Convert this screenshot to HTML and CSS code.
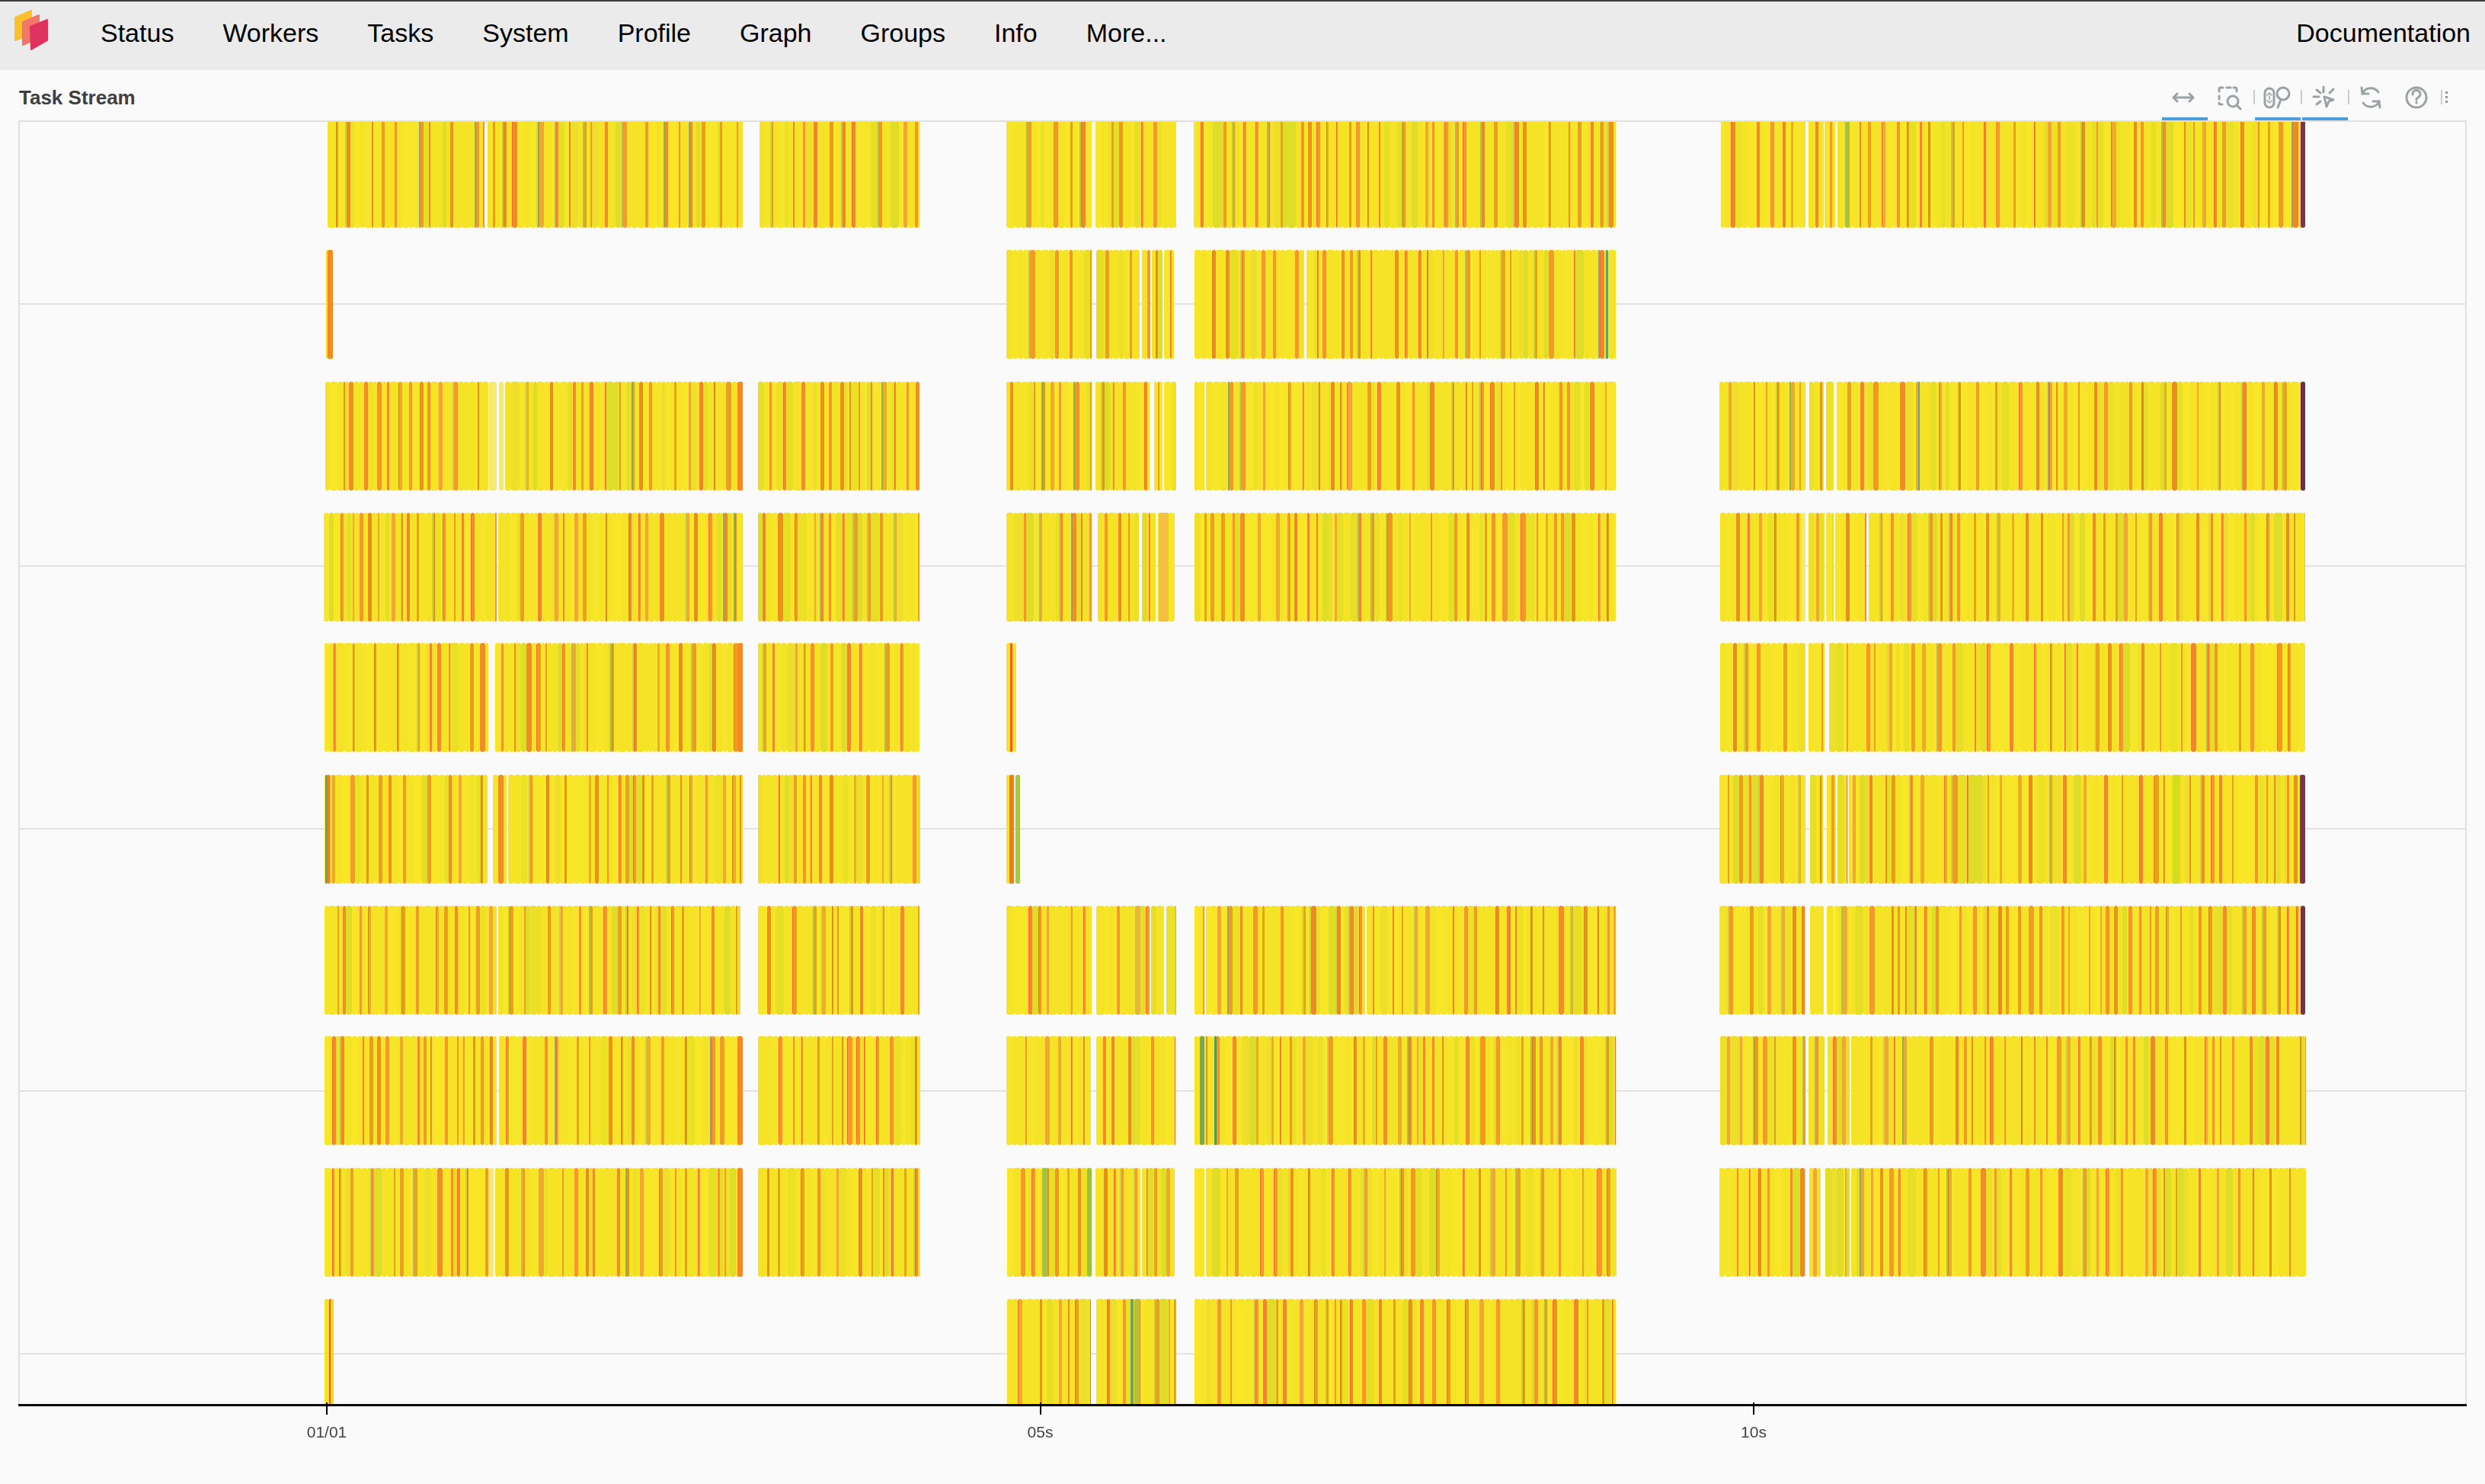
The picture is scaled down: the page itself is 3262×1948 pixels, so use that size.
FILE: index.html
```html
<!DOCTYPE html>
<html>
<head>
  <title>Dask: Task Stream</title>
  <link rel="stylesheet" href="styles.css">
</head>
<body>
  <div class="navbar">
    <svg class="logo" width="48" height="56" viewBox="0 0 48 56">
      <path class="logo-back" d="M2 11 L23 2 L23 32 L2 41 Z"/>
      <path class="logo-mid" d="M12 17 L33 8 L33 38 L12 47 Z"/>
      <path class="logo-front" d="M22 23 L44 14 L44 41 L23 53 Z"/>
    </svg>
    <a class="nav-link" href="#">Status</a>
    <a class="nav-link" href="#">Workers</a>
    <a class="nav-link" href="#">Tasks</a>
    <a class="nav-link" href="#">System</a>
    <a class="nav-link" href="#">Profile</a>
    <a class="nav-link" href="#">Graph</a>
    <a class="nav-link" href="#">Groups</a>
    <a class="nav-link" href="#">Info</a>
    <a class="nav-link" href="#">More...</a>
    <a class="nav-link nav-docs" href="#">Documentation</a>
  </div>

  <div class="chart-header">
    <div class="chart-title">Task Stream</div>
    <div class="toolbar">
      <div class="tool tool-active">
        <svg class="tool-icon" width="60" height="58" viewBox="0 0 60 58">
          <path d="M15 32 H41 M20 27 L15 32 L20 37 M36 27 L41 32 L36 37"/>
        </svg>
      </div>
      <div class="tool">
        <svg class="tool-icon" width="60" height="58" viewBox="0 0 60 58">
          <path d="M15 24 V21 Q15 19 17 19 H20 M25 19 H30 M34 19 H36 Q38 19 38 21 V24 M15 30 V34 M15 39 V40 Q15 41 17 41 H19"/>
          <circle cx="33" cy="37" r="7"/>
          <path d="M38 42 L43 47"/>
        </svg>
      </div>
      <div class="tool-sep"></div>
      <div class="tool tool-active">
        <svg class="tool-icon" width="60" height="58" viewBox="0 0 60 58">
          <rect x="13" y="20" width="12" height="25" rx="6"/>
          <path class="thin" d="M16 29 L19 26 L22 29 M16 36 L19 39 L22 36 M19 30 V35"/>
          <circle cx="37" cy="27" r="8"/>
          <path d="M34 35 L30 45"/>
        </svg>
      </div>
      <div class="tool-sep"></div>
      <div class="tool tool-active">
        <svg class="tool-icon" width="60" height="58" viewBox="0 0 60 58">
          <path d="M28 18 V25 M15 31 H22 M19 22 L24 26 M41 21 L36 26 M19 41 L24 37"/>
          <path d="M29 31 L41 35 L35 37 L32 44 Z"/>
        </svg>
      </div>
      <div class="tool-sep"></div>
      <div class="tool">
        <svg class="tool-icon" width="60" height="58" viewBox="0 0 60 58">
          <path d="M17 27 A12 12 0 0 1 38 25 M39 37 A12 12 0 0 1 18 39"/>
          <path d="M16 19 L17 27 L25 27 M40 45 L39 37 L31 37"/>
        </svg>
      </div>
      <div class="tool">
        <svg class="tool-icon" width="60" height="58" viewBox="0 0 60 58">
          <circle cx="28" cy="32" r="13"/>
          <path d="M23 28 A5 5 0 1 1 30 32 Q28 33 28 35 M28 38 V39"/>
        </svg>
      </div>
      <div class="tool-sep"></div>
      <div class="tool-grip">
        <span class="grip-dot"></span>
        <span class="grip-dot"></span>
        <span class="grip-dot"></span>
      </div>
    </div>
  </div>

  <div class="plot">
    <canvas id="stream" width="3210" height="1683"></canvas>
  </div>
  <div class="axis">
    <div class="tick"><div class="tick-mark"></div><div class="tick-label">01/01</div></div>
    <div class="tick"><div class="tick-mark"></div><div class="tick-label">05s</div></div>
    <div class="tick"><div class="tick-mark"></div><div class="tick-label">10s</div></div>
  </div>

  <script src="chart.js"></script>
</body>
</html>
```
FILE: styles.css
```css
html, body {
  margin: 0;
  padding: 0;
}

body {
  background-color: #fafafa;
  font-family: "Liberation Sans", Arial, sans-serif;
  overflow: hidden;
}

.navbar {
  display: flex;
  align-items: flex-start;
  height: 90px;
  background-color: #ebebeb;
  border-top: 2px solid #3d3d3d;
  padding-left: 18px;
  padding-right: 19px;
}

.logo {
  margin-top: 10px;
  margin-right: 66px;
  flex: none;
}

.logo path {
  stroke-width: 2;
  stroke-linejoin: round;
}

.logo-back {
  fill: #fbc02d;
  stroke: #fbc02d;
}

.logo-mid {
  fill: #f4766a;
  stroke: #f4766a;
}

.logo-front {
  fill: #e0325e;
  stroke: #e0325e;
}

.nav-link {
  color: #000;
  text-decoration: none;
  font-size: 34px;
  line-height: 40px;
  margin-top: 21px;
  margin-right: 64px;
}

.nav-docs {
  margin-left: auto;
  margin-right: 0;
}

.chart-header {
  display: flex;
  justify-content: space-between;
  height: 66px;
  padding: 0 24px 0 25px;
}

.chart-title {
  font-size: 26px;
  font-weight: bold;
  color: #3f3f3f;
  line-height: 30px;
  margin-top: 21px;
}

.toolbar {
  display: flex;
  align-self: flex-end;
}

.tool {
  width: 60px;
  height: 58px;
  border-bottom: 4px solid transparent;
}

.tool-active {
  border-bottom-color: #4a9ede;
}

.tool-icon {
  display: block;
  fill: none;
  stroke: #9aa2a3;
  stroke-width: 3;
  stroke-linecap: round;
  stroke-linejoin: round;
}

.tool-icon .thin {
  stroke-width: 1.5;
}

.tool-sep {
  width: 2px;
  height: 19px;
  margin-top: 22px;
  background-color: #c9cccc;
}

.tool-grip {
  display: flex;
  flex-direction: column;
  justify-content: space-between;
  width: 3px;
  height: 15px;
  margin-top: 24px;
  margin-left: 4px;
  margin-right: 25px;
}

.grip-dot {
  width: 3px;
  height: 3px;
  background-color: #8f9797;
}

.plot {
  border: 2px solid #e0e0e0;
  border-bottom: none;
  margin: 0 24px;
}

#stream {
  display: block;
}

.axis {
  display: flex;
  gap: 856.5px;
  margin: 0 24px;
  padding-left: 365px;
  border-top: 3px solid #000;
}

.tick {
  width: 80px;
  text-align: center;
}

.tick-mark {
  width: 2px;
  height: 16px;
  margin: -5px auto 0;
  background-color: #000;
  position: relative;
}

.tick-label {
  font-size: 21px;
  line-height: 24px;
  color: #444;
  margin-top: 11px;
}
```
FILE: chart.js
```js
// seeded so the stripes stay the same on every load
var seed = 20231;
function rand() {
  seed = (seed + 0x6d2b79f5) | 0;
  var t = Math.imul(seed ^ (seed >>> 15), 1 | seed);
  t = (t + Math.imul(t ^ (t >>> 7), 61 | t)) ^ t;
  return ((t ^ (t >>> 14)) >>> 0) / 4294967296;
}

function between(a, b) {
  return a + Math.floor(rand() * (b - a + 1));
}

function pick(list) {
  return list[Math.floor(rand() * list.length)];
}

var YELLOWS = ['#f6e326', '#f5e325', '#f7e52a', '#f4e326', '#f6e326', '#f8e627'];
var LIMES = ['#ece125', '#e6df26', '#e0dd28', '#eee02a'];
var ORANGES = ['#f39a24', '#f29624', '#f19c2a', '#f08e26', '#ef8828', '#f0a830'];
var GREENS = ['#bccc3c', '#cad33a', '#adc246'];
var TEALS = ['#86ae5a', '#8eb056', '#96a66c'];

// page coordinates of the top of each row, and of the worker's busy spells
var ROW_TOPS = [156, 328, 501, 673, 844, 1017, 1189, 1360, 1533, 1705];
var ROW_HEIGHT = 143;
var SPELLS = [
  [[430, 636], [640, 975], [997, 1207], [1321, 1433], [1438, 1544], [1567, 2121], [2259, 2370], [2374, 2394], [2395, 2409], [2412, 3026]],
  [[428, 437], [1321, 1433], [1439, 1496], [1499, 1510], [1512, 1526], [1528, 1541], [1568, 1712], [1715, 2121]],
  [[427, 641], [663, 975], [995, 1207], [1321, 1433], [1438, 1509], [1515, 1526], [1528, 1544], [1568, 1581], [1583, 2121], [2257, 2370], [2375, 2394], [2397, 2407], [2411, 3026]],
  [[425, 652], [654, 975], [995, 1207], [1321, 1433], [1441, 1495], [1499, 1517], [1520, 1542], [1568, 2121], [2258, 2365], [2374, 2395], [2397, 2407], [2409, 2450], [2453, 3026]],
  [[426, 641], [650, 975], [995, 1207], [1321, 1334], [2258, 2370], [2374, 2395], [2401, 3026]],
  [[426, 640], [647, 665], [667, 975], [995, 1208], [1321, 1331], [1333, 1339], [2257, 2370], [2376, 2393], [2398, 2410], [2412, 2425], [2427, 3026]],
  [[426, 652], [654, 972], [995, 1207], [1321, 1433], [1439, 1509], [1511, 1528], [1531, 1544], [1568, 1581], [1583, 1792], [1794, 2121], [2257, 2370], [2376, 2394], [2398, 2407], [2408, 3026]],
  [[426, 652], [655, 974], [995, 1208], [1321, 1432], [1439, 1543], [1568, 2121], [2258, 2370], [2374, 2395], [2399, 2428], [2430, 3027]],
  [[426, 641], [650, 974], [995, 1208], [1322, 1433], [1438, 1497], [1499, 1542], [1568, 1581], [1583, 2122], [2257, 2370], [2375, 2390], [2396, 2428], [2430, 3027]],
  [[426, 438], [1322, 1432], [1439, 1544], [1568, 2121]]
];

// the long tasks that stand out: row, from, to, colour
var MARKS = [
  [0, 3020, 3026, '#7c3350'], [2, 3020, 3026, '#6f2f48'], [5, 3019, 3026, '#7c3350'], [6, 3020, 3026, '#76314e'],
  [0, 2422, 2428, '#a8c23c'], [2, 2518, 2520, '#6c9ca0'], [5, 2852, 2862, '#d6dc1e'],
  [1, 430, 437, '#f38a22'], [2, 968, 975, '#f38a22'], [4, 968, 975, '#f38a22'], [7, 968, 975, '#f38a22'], [8, 968, 975, '#f38a22'],
  [1, 2108, 2111, '#5fa268'], [3, 1521, 1534, '#f5c040'], [4, 1326, 1329, '#ec5f2a'], [5, 1325, 1330, '#ee7a28'],
  [5, 1333, 1339, '#a9c744'], [6, 1490, 1497, '#e4b83a'], [7, 1575, 1581, '#74aa5c'], [7, 1594, 1597, '#4f9e55'],
  [8, 1368, 1375, '#a6c23f'], [8, 1427, 1433, '#9dc13f'], [9, 1484, 1488, '#6fa564'], [9, 1489, 1496, '#b6c23c'],
  [9, 432, 434, '#ef5c3a'], [9, 434, 438, '#fbd321'], [5, 429, 433, '#ee7a28'], [5, 427, 429, '#5fa268']
];

// pale tasks that sit in the gaps of a row
var PALE_TASKS = [
  [2, 642, 652], [2, 655, 661], [8, 641, 648], [3, 2365, 2370]
];

var GRID_LINES = [399, 743, 1088, 1432, 1777];
var ORIGIN_X = 26;
var ORIGIN_Y = 160;

var canvas = document.getElementById('stream');
var ctx = canvas.getContext('2d');

function drawTask(x0, x1, y, color) {
  var w = x1 - x0;
  ctx.fillStyle = color;
  ctx.beginPath();
  ctx.roundRect(x0 - ORIGIN_X, y - ORIGIN_Y, w, ROW_HEIGHT, Math.min(w / 2, 3));
  ctx.fill();
}

// a run of yellow tasks, then one short orange one, over and over
function drawSpell(start, end, y) {
  var x = start;
  while (x < end) {
    var run = rand() < 0.55 ? between(5, 14) : between(14, 30);
    var stop = Math.min(x + run, end);
    while (x < stop) {
      var w = between(5, 11);
      var color = rand() < 0.18 ? pick(LIMES) : pick(YELLOWS);
      drawTask(x, Math.min(x + w, stop), y, color);
      x += w;
    }
    x = stop;
    if (x >= end) break;

    var r = rand();
    if (r < 0.12) {
      drawTask(x, Math.min(x + 2, end), y, pick(GREENS));
      x += 2;
    } else if (r < 0.15) {
      drawTask(x, Math.min(x + 2, end), y, pick(TEALS));
      x += 2;
    }
    if (x >= end) break;

    var orange = rand() < 0.88 ? between(2, 5) : between(5, 7);
    stop = Math.min(x + orange, end);
    drawTask(x, stop, y, pick(ORANGES));
    if (rand() < 0.25) {
      ctx.fillStyle = '#ee6f2c';
      ctx.fillRect(x - ORIGIN_X, y - ORIGIN_Y + 2, 1, ROW_HEIGHT - 4);
    }
    x = stop;
  }
}

ctx.fillStyle = '#e2e2e2';
GRID_LINES.forEach(function (y) {
  ctx.fillRect(0, y - 1 - ORIGIN_Y, canvas.width, 2);
});

SPELLS.forEach(function (spells, row) {
  spells.forEach(function (spell) {
    drawSpell(spell[0], spell[1], ROW_TOPS[row]);
  });
});

PALE_TASKS.forEach(function (t) {
  drawTask(t[1], t[2], ROW_TOPS[t[0]], '#f8ea70');
});

MARKS.forEach(function (m) {
  drawTask(m[1], m[2], ROW_TOPS[m[0]], m[3]);
});
```
